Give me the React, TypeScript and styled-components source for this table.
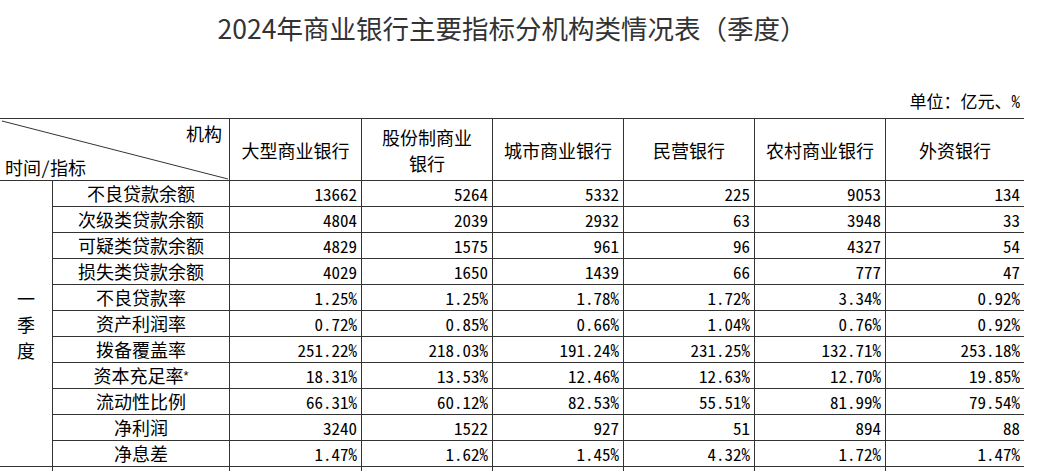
import React from 'react';
import styled, { createGlobalStyle } from 'styled-components';

const GlobalStyle = createGlobalStyle`
  html, body { margin: 0; padding: 0; background: #fff; }
  body { font-family: "Noto Sans Mono CJK SC", "Noto Sans CJK SC", sans-serif; color: #000; }
`;

const LINE = '#333';

const Page = styled.div`
  width: 1024px;
  display: flex;
  flex-direction: column;
`;

const Title = styled.h1`
  margin: 0;
  width: 1024px;
  height: 56px;
  line-height: 56px;
  text-align: center;
  font-family: "Noto Sans CJK SC", sans-serif;
  font-weight: 400;
  font-size: 26.5px;
  color: #333;
`;

const UnitBar = styled.div`
  height: 62px;
  box-sizing: border-box;
  display: flex;
  align-items: flex-end;
  justify-content: flex-end;
  padding: 0 4px 7px 0;
  font-size: 17px;
  line-height: 20px;
`;

const Grid = styled.div`
  display: grid;
  grid-template-columns: 53px 177px 132px 131px 131px 131px 131px 138px;
  grid-template-rows: 62px repeat(12, 26px);
  border-top: 1px solid ${LINE};
`;

const Cell = styled.div<{ $last?: boolean }>`
  box-sizing: border-box;
  border-bottom: 1px solid ${LINE};
  border-right: ${(p) => (p.$last ? 'none' : `1px solid ${LINE}`)};
  display: flex;
  align-items: center;
  overflow: hidden;
  white-space: nowrap;
`;

const Corner = styled(Cell)`
  grid-column: span 2;
  position: relative;
  flex-direction: column;
  align-items: stretch;
  justify-content: space-between;
  padding: 4px 7px 3px 5px;
  font-size: 18px;
  line-height: 20px;
`;

const CornerTop = styled.span`
  text-align: right;
`;

const CornerBottom = styled.span`
  text-align: left;
`;

const Diagonal = styled.svg`
  position: absolute;
  left: 0;
  top: 0;
  width: 100%;
  height: 100%;
  pointer-events: none;
`;

const HeadCell = styled(Cell)`
  justify-content: center;
  text-align: center;
  white-space: pre-line;
  font-size: 18px;
  line-height: 26px;
`;

const Period = styled(Cell)<{ $span: number }>`
  grid-row: span ${(p) => p.$span};
  justify-content: center;
  text-align: center;
  white-space: pre-line;
  font-size: 18px;
  line-height: 26px;
`;

const Label = styled(Cell)`
  justify-content: center;
  font-size: 18px;
  line-height: 25px;
`;

const Sup = styled.sup`
  font-family: "Liberation Sans", sans-serif;
  font-size: 13px;
  line-height: 0;
  vertical-align: 6px;
`;

const Value = styled(Cell)`
  justify-content: flex-end;
  padding-right: 4px;
  font-size: 17px;
  line-height: 25px;
`;

const banks = ['大型商业银行', '股份制商业\n银行', '城市商业银行', '民营银行', '农村商业银行', '外资银行'];

type Row = { label: string; sup?: boolean; values: string[] };

const rows: Row[] = [
  { label: '不良贷款余额', values: ['13662', '5264', '5332', '225', '9053', '134'] },
  { label: '次级类贷款余额', values: ['4804', '2039', '2932', '63', '3948', '33'] },
  { label: '可疑类贷款余额', values: ['4829', '1575', '961', '96', '4327', '54'] },
  { label: '损失类贷款余额', values: ['4029', '1650', '1439', '66', '777', '47'] },
  { label: '不良贷款率', values: ['1.25%', '1.25%', '1.78%', '1.72%', '3.34%', '0.92%'] },
  { label: '资产利润率', values: ['0.72%', '0.85%', '0.66%', '1.04%', '0.76%', '0.92%'] },
  { label: '拨备覆盖率', values: ['251.22%', '218.03%', '191.24%', '231.25%', '132.71%', '253.18%'] },
  { label: '资本充足率', sup: true, values: ['18.31%', '13.53%', '12.46%', '12.63%', '12.70%', '19.85%'] },
  { label: '流动性比例', values: ['66.31%', '60.12%', '82.53%', '55.51%', '81.99%', '79.54%'] },
  { label: '净利润', values: ['3240', '1522', '927', '51', '894', '88'] },
  { label: '净息差', values: ['1.47%', '1.62%', '1.45%', '4.32%', '1.72%', '1.47%'] },
];

export default function App() {
  return (
    <>
      <GlobalStyle />
      <Page>
        <Title>2024年商业银行主要指标分机构类情况表（季度）</Title>
        <UnitBar>单位：亿元、%</UnitBar>
        <Grid>
          <Corner>
            <Diagonal viewBox="0 0 230 61" preserveAspectRatio="none">
              <line x1="2" y1="2" x2="229" y2="60" stroke={LINE} strokeWidth="1" />
            </Diagonal>
            <CornerTop>机构</CornerTop>
            <CornerBottom>时间/指标</CornerBottom>
          </Corner>
          {banks.map((b, i) => (
            <HeadCell key={b} $last={i === banks.length - 1}>
              {b}
            </HeadCell>
          ))}
          <Period $span={rows.length}>{'一\n季\n度'}</Period>
          {rows.map((r) => (
            <React.Fragment key={r.label}>
              <Label>
                {r.label}
                {r.sup && <Sup>*</Sup>}
              </Label>
              {r.values.map((v, i) => (
                <Value key={i} $last={i === r.values.length - 1}>
                  {v}
                </Value>
              ))}
            </React.Fragment>
          ))}
          <Period $span={1} />
          <Label />
          {banks.map((b, i) => (
            <Value key={b} $last={i === banks.length - 1} />
          ))}
        </Grid>
      </Page>
    </>
  );
}
